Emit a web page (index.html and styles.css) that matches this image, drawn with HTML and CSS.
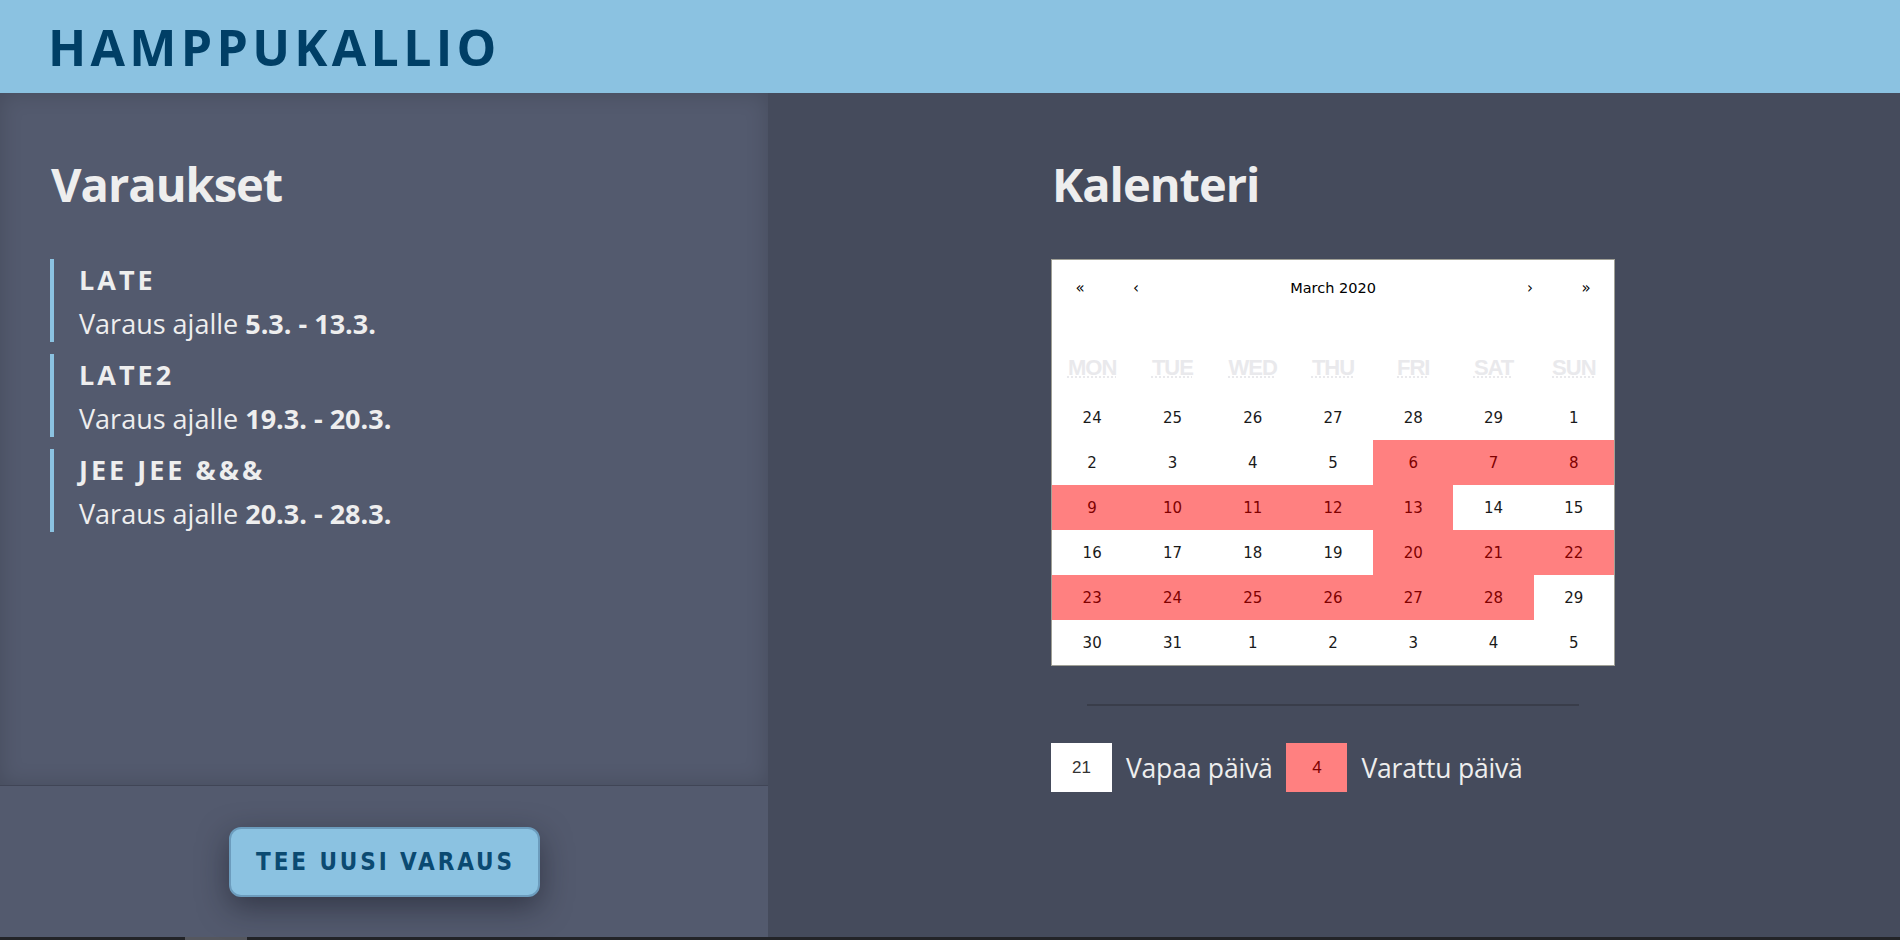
FILE: index.html
```html
<!DOCTYPE html>
<html lang="fi">
<head>
<meta charset="utf-8">
<title>Hamppukallio</title>
<link rel="stylesheet" href="styles.css">
</head>
<body>
<header class="topbar">
  <h1 class="brand">HAMPPUKALLIO</h1>
</header>
<main class="main">
  <section class="left">
    <div class="left-top">
      <h2 class="heading">Varaukset</h2>
      <ul class="res-list">
        <li class="res">
          <div class="res-name">LATE</div>
          <div class="res-dates">Varaus ajalle <b>5.3. - 13.3.</b></div>
        </li>
        <li class="res">
          <div class="res-name">LATE2</div>
          <div class="res-dates">Varaus ajalle <b>19.3. - 20.3.</b></div>
        </li>
        <li class="res">
          <div class="res-name">JEE JEE &amp;&amp;&amp;</div>
          <div class="res-dates">Varaus ajalle <b>20.3. - 28.3.</b></div>
        </li>
      </ul>
    </div>
    <div class="left-bottom">
      <button class="new-btn">TEE UUSI VARAUS</button>
    </div>
  </section>
  <section class="right">
    <div class="right-col">
      <h2 class="heading">Kalenteri</h2>
      <div class="calendar">
        <div class="cal-nav">
          <button class="nav-btn">«</button>
          <button class="nav-btn">‹</button>
          <div class="nav-label">March 2020</div>
          <button class="nav-btn">›</button>
          <button class="nav-btn">»</button>
        </div>
        <div class="weekdays">
          <div class="wd"><abbr title="Monday">MON</abbr></div>
          <div class="wd"><abbr title="Tuesday">TUE</abbr></div>
          <div class="wd"><abbr title="Wednesday">WED</abbr></div>
          <div class="wd"><abbr title="Thursday">THU</abbr></div>
          <div class="wd"><abbr title="Friday">FRI</abbr></div>
          <div class="wd"><abbr title="Saturday">SAT</abbr></div>
          <div class="wd"><abbr title="Sunday">SUN</abbr></div>
        </div>
        <div class="days">
          <div class="day">24</div><div class="day">25</div><div class="day">26</div><div class="day">27</div><div class="day">28</div><div class="day">29</div><div class="day">1</div>
          <div class="day">2</div><div class="day">3</div><div class="day">4</div><div class="day">5</div><div class="day booked">6</div><div class="day booked">7</div><div class="day booked">8</div>
          <div class="day booked">9</div><div class="day booked">10</div><div class="day booked">11</div><div class="day booked">12</div><div class="day booked">13</div><div class="day">14</div><div class="day">15</div>
          <div class="day">16</div><div class="day">17</div><div class="day">18</div><div class="day">19</div><div class="day booked">20</div><div class="day booked">21</div><div class="day booked">22</div>
          <div class="day booked">23</div><div class="day booked">24</div><div class="day booked">25</div><div class="day booked">26</div><div class="day booked">27</div><div class="day booked">28</div><div class="day">29</div>
          <div class="day">30</div><div class="day">31</div><div class="day">1</div><div class="day">2</div><div class="day">3</div><div class="day">4</div><div class="day">5</div>
        </div>
      </div>
      <hr class="sep">
      <div class="legend">
        <div class="swatch free">21</div>
        <span class="legend-text">Vapaa päivä</span>
        <div class="swatch taken">4</div>
        <span class="legend-text">Varattu päivä</span>
      </div>
    </div>
  </section>
</main>
<footer class="bottom-strip"><div class="strip-thumb"></div></footer>
</body>
</html>
```
FILE: styles.css
```css
* { box-sizing: border-box; }
html, body { margin: 0; padding: 0; }
body {
  width: 1900px;
  height: 940px;
  overflow: hidden;
  font-family: "Open Sans", "Noto Sans", sans-serif;
  background: #454b5c;
  color: #eeeeee;
}

.topbar {
  height: 93px;
  background: #8bc2e1;
  padding: 22px 0 0 48px;
}
.brand {
  margin: 0;
  font-size: 50px;
  line-height: 50px;
  font-weight: 700;
  letter-spacing: 4.3px;
  color: #003f66;
}

.main {
  display: flex;
  height: 844px;
}

.left {
  width: 768px;
  display: flex;
  flex-direction: column;
  background: #535a6e;
}
.left-top {
  height: 693px;
  padding: 67px 51px 0 50px;
  border-bottom: 1px solid #404556;
  box-shadow: inset 0 0 22px rgba(0, 0, 0, 0.16);
}
.left-bottom {
  flex: 1;
  display: flex;
  align-items: center;
  justify-content: center;
}

.heading {
  margin: 0 0 51px 1px;
  font-size: 47px;
  line-height: 48px;
  font-weight: 700;
  letter-spacing: -1px;
  color: #eeeeee;
}

.res-list {
  list-style: none;
  margin: 0;
  padding: 0;
  display: flex;
  flex-direction: column;
  gap: 12px;
}
.res {
  border-left: 4px solid #8bc2e1;
  padding-left: 25px;
  height: 83px;
}
.res-name {
  font-size: 27px;
  line-height: 42px;
  font-weight: 700;
  letter-spacing: 3px;
  margin-bottom: 5px;
}
.res-dates {
  font-size: 27px;
  line-height: 36px;
  font-weight: 400;
}
.res-dates b { font-weight: 700; }

.new-btn {
  width: 311px;
  height: 70px;
  border: 2px solid #6c9cbd;
  border-radius: 12px;
  background: #8bc2e1;
  color: #0b4a71;
  font-family: "DejaVu Sans Condensed", "DejaVu Sans", sans-serif;
  font-weight: 700;
  font-size: 24px;
  letter-spacing: 2.9px;
  padding: 0 0 0 3px;
  box-shadow: 0 10px 30px rgba(20, 22, 34, 0.5);
}

.right {
  flex: 1;
  display: flex;
  justify-content: center;
  padding-top: 67px;
}
.right-col {
  width: 564px;
  margin-left: -2px;
}

.calendar {
  width: 564px;
  background: #ffffff;
  border: 1px solid #a0a096;
  color: #1a1a1a;
  font-family: "DejaVu Sans", Verdana, sans-serif;
  font-size: 15px;
}
.cal-nav {
  display: grid;
  grid-template-columns: 56px 56px 1fr 56px 56px;
  height: 56px;
  margin-bottom: 24px;
  font-size: 14.5px;
}
.nav-btn {
  border: 0;
  background: transparent;
  font-family: "DejaVu Sans", Verdana, sans-serif;
  font-size: 15px;
  color: #000;
  padding: 0;
}
.nav-label {
  display: flex;
  align-items: center;
  justify-content: center;
  color: #000;
}

.weekdays {
  display: grid;
  grid-template-columns: repeat(7, 1fr);
  height: 55px;
  align-items: center;
  text-align: center;
}
.wd abbr {
  font-family: "Liberation Sans", Arial, sans-serif;
  font-weight: 700;
  font-size: 22px;
  letter-spacing: -1px;
  color: #e9e9ec;
  text-decoration: underline dotted;
  text-decoration-thickness: 2px;
  text-underline-offset: 2px;
}

.days {
  display: grid;
  grid-template-columns: repeat(7, 1fr);
  grid-auto-rows: 45px;
}
.day {
  display: flex;
  align-items: center;
  justify-content: center;
  color: #1a1a1a;
}
.day.booked {
  background: #ff8080;
  color: #800000;
}

.sep {
  margin: 38px 36px 0 36px;
  height: 2px;
  border: 0;
  background: #393d4a;
}

.legend {
  display: flex;
  align-items: center;
  margin-top: 37px;
  gap: 14px;
}
.swatch {
  width: 61px;
  height: 49px;
  display: flex;
  align-items: center;
  justify-content: center;
  font-family: "Liberation Sans", Arial, sans-serif;
  font-size: 17px;
}
.swatch.free { background: #ffffff; color: #333333; }
.swatch.taken { background: #ff8080; color: #800000; }
.legend-text {
  font-size: 26.5px;
  line-height: 36px;
  letter-spacing: -0.2px;
  color: #eeeeee;
}

.bottom-strip {
  height: 3px;
  background: #232428;
}
.strip-thumb {
  width: 62px;
  height: 3px;
  margin-left: 185px;
  background: #55575e;
}
```
